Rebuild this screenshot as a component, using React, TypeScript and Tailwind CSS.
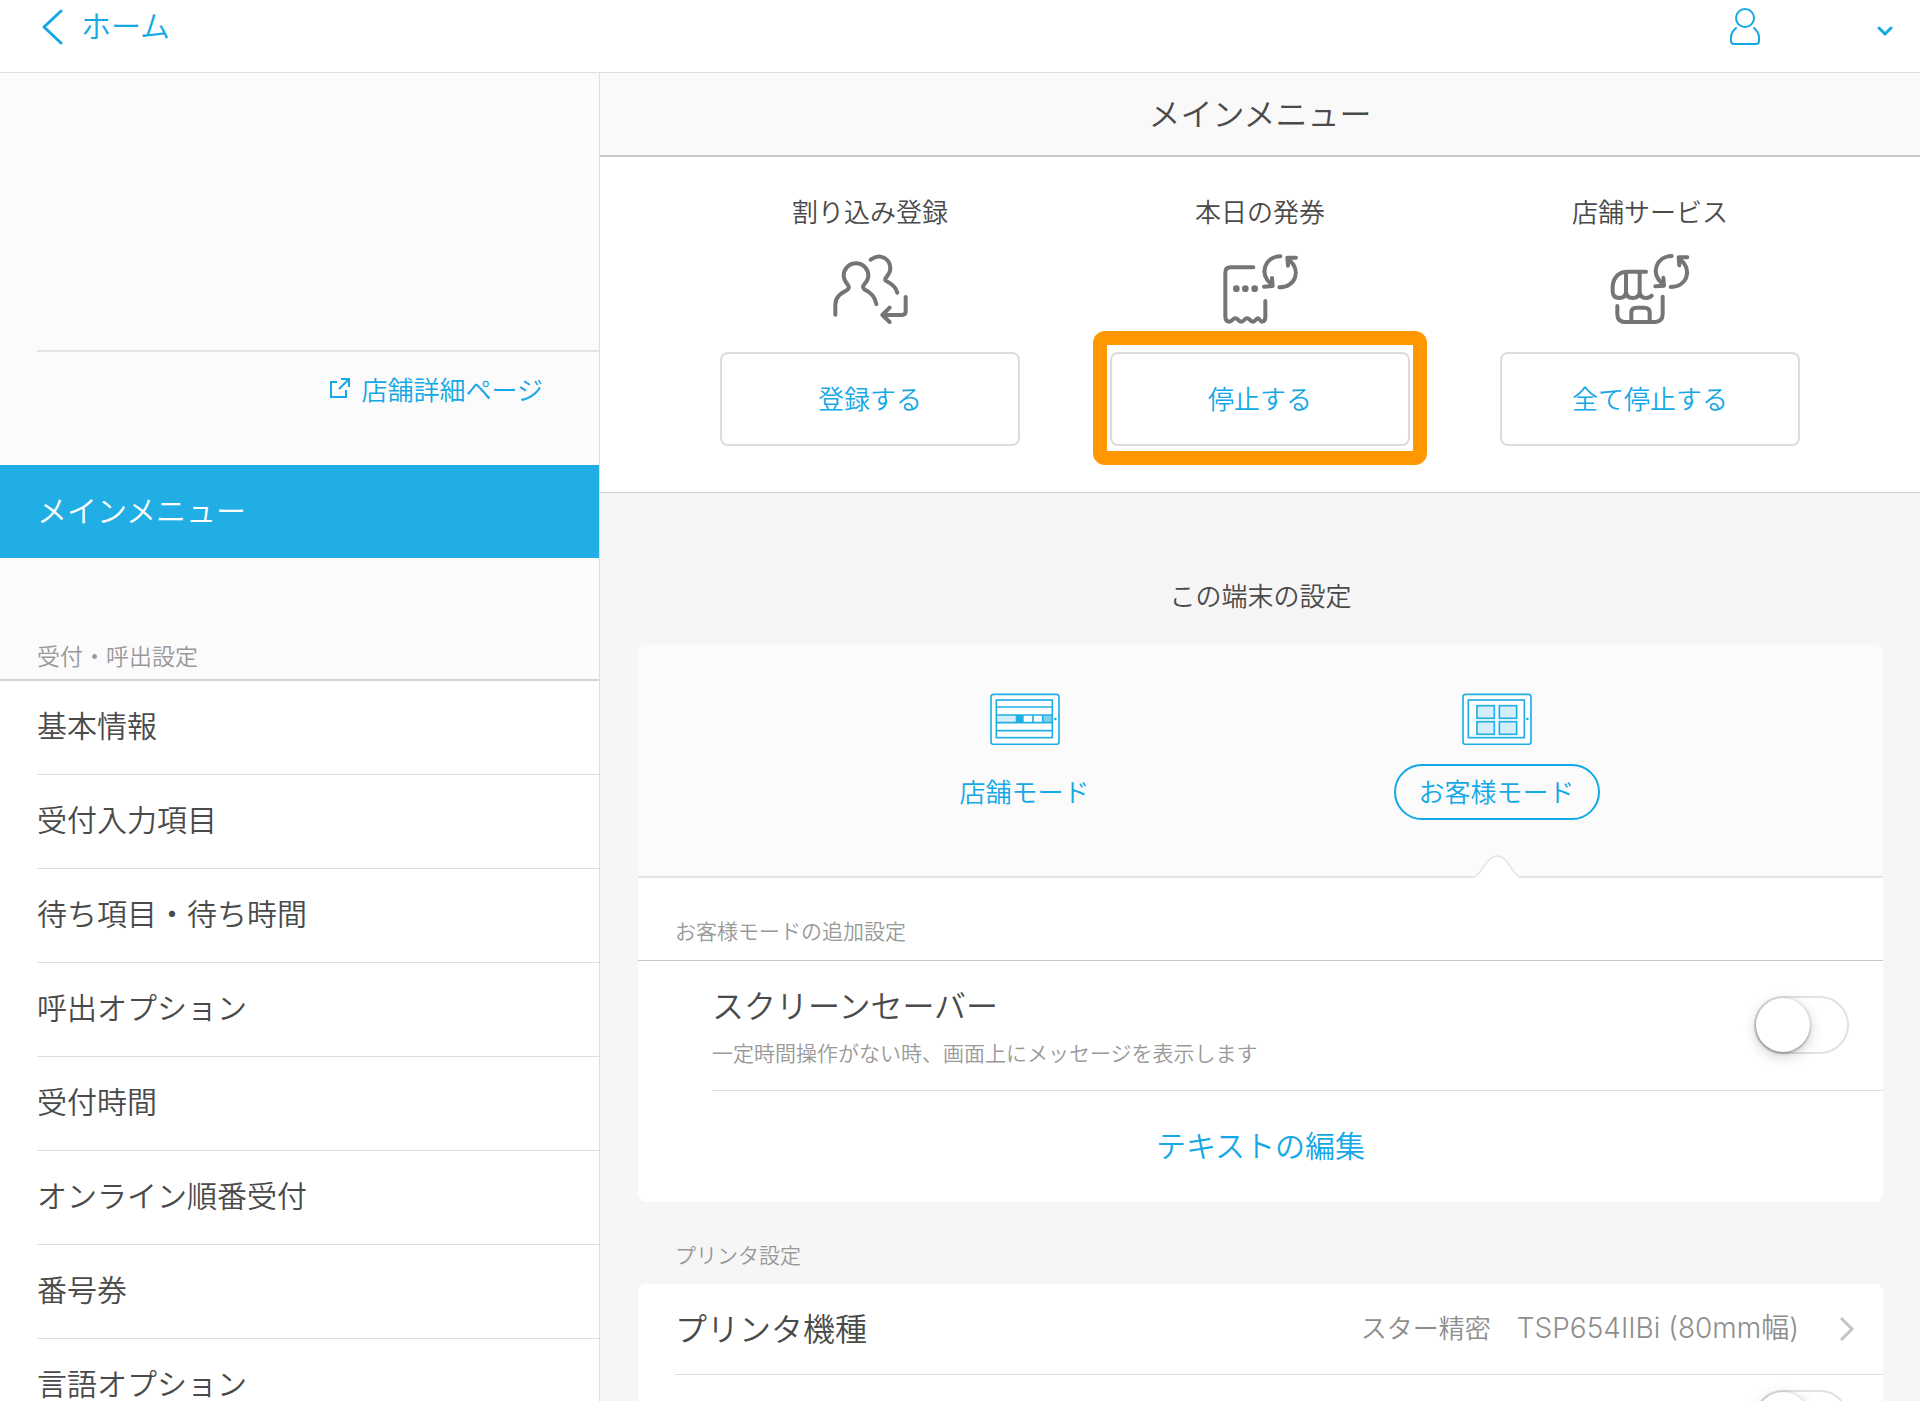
import { ReactNode } from "react";

const menuItems = [
  "基本情報",
  "受付入力項目",
  "待ち項目・待ち時間",
  "呼出オプション",
  "受付時間",
  "オンライン順番受付",
  "番号券",
  "言語オプション",
];

function SyncArrows() {
  return (
    <>
      <path d="M211 34C166 35 145 84 184 118" />
      <path d="M162 125L188 123L186 99" />
      <path d="M208 127C256 127 276 76 236 44" />
      <path d="M258 38L232 38L234 62" />
    </>
  );
}

function ActionIcon({ children }: { children: ReactNode }) {
  return (
    <svg
      className="h-[90px] w-[100px]"
      viewBox="0 0 300 270"
      fill="none"
      stroke="#757575"
      strokeWidth="12"
      strokeLinecap="round"
      strokeLinejoin="round"
      aria-hidden="true"
    >
      {children}
    </svg>
  );
}

function PeopleIcon() {
  return (
    <ActionIcon>
      <path d="M46 209V178C47 155 62 146 80 136Q90 130 84 120C75 108 71 104 71 92A37 37 0 0 1 145 92C145 104 140 110 132 119Q126 128 134 134C150 141 164 152 169 177" />
      <path d="M152 44C180 22 211 42 211 70C211 85 203 92 197 99Q193 105 200 109C218 118 228 128 232 143" />
      <path d="M257 156V199Q257 210 246 210H187M209 188L187 210L209 231" />
    </ActionIcon>
  );
}

function TicketIcon() {
  return (
    <ActionIcon>
      <path d="M130 67H62Q46 67 46 83V216Q47 230 58 230C67 230 68 220 76 220S86 230 94 230S103 220 111 220S121 230 129 230S138 220 144 220S149 230 156 230Q166 229 166 216V168" />
      <g fill="#757575" stroke="none">
        <circle cx="79" cy="131" r="10" />
        <circle cx="106" cy="131" r="10" />
        <circle cx="134" cy="131" r="10" />
      </g>
      <SyncArrows />
    </ActionIcon>
  );
}

function StoreIcon() {
  return (
    <ActionIcon>
      <path d="M138 80H82C54 80 38 102 38 128V139Q39 159 58 159Q77 159 78 140V82M78 140Q79 159 98 159Q118 159 119 140V82M119 140Q120 159 138 159Q149 159 155 152" />
      <path d="M52 183V209Q53 231 75 231H165Q187 230 188 208V155" />
      <path d="M94 230V203Q94 188 109 188H133Q149 188 149 203V230" />
      <g transform="translate(4 -1)">
        <SyncArrows />
      </g>
    </ActionIcon>
  );
}

function TabletIcon({ children }: { children: ReactNode }) {
  return (
    <svg
      className="h-[52px] w-[70px]"
      viewBox="28 26 210 156"
      fill="none"
      stroke="#20aee5"
      strokeWidth="5"
      aria-hidden="true"
    >
      <rect x="31" y="30" width="204" height="150" rx="8" fill="#fff" />
      {children}
      <rect x="47" y="47" width="168" height="113" />
      <circle cx="224" cy="104" r="4" fill="#20aee5" stroke="none" />
    </svg>
  );
}

function StoreModeIcon() {
  return (
    <TabletIcon>
      <g stroke="none">
        <rect x="49" y="92" width="56" height="23" fill="#d4edf8" />
        <rect x="105" y="92" width="24" height="23" fill="#20aee5" />
        <rect x="186" y="92" width="29" height="23" fill="#7dcdef" />
      </g>
      <path d="M47 68H215M47 92H215M47 115H215M47 139H215M157 92V115M186 92V115" />
    </TabletIcon>
  );
}

function CustomerModeIcon() {
  return (
    <TabletIcon>
      <g fill="#d4edf8">
        <rect x="73" y="64" width="52" height="38" />
        <rect x="140" y="64" width="52" height="38" />
        <rect x="73" y="112" width="52" height="38" />
        <rect x="140" y="112" width="52" height="38" />
      </g>
    </TabletIcon>
  );
}

function Action({
  title,
  label,
  icon,
  highlighted = false,
}: {
  title: string;
  label: string;
  icon: ReactNode;
  highlighted?: boolean;
}) {
  return (
    <div className="flex w-[300px] flex-col items-center">
      <h2 className="text-[26px] leading-9">{title}</h2>
      <div className="mt-4">{icon}</div>
      <div className="relative mt-[17px] w-full">
        <button
          type="button"
          className="h-[94px] w-full rounded-lg border-2 border-[#dcdcdc] bg-white pb-1 text-[26px] text-[#14a8e6]"
        >
          {label}
        </button>
        {highlighted && (
          <span className="pointer-events-none absolute -inset-x-[17px] -top-[21px] -bottom-[19px] rounded-xl border-14 border-[#ff9800]" />
        )}
      </div>
    </div>
  );
}

function Toggle({ id, label }: { id: string; label?: string }) {
  return (
    <input
      id={id}
      type="checkbox"
      role="switch"
      aria-label={label}
      className="flex h-[58px] w-[95px] shrink-0 cursor-pointer appearance-none items-center rounded-full border-2 border-[#e2e2e2] bg-white before:h-[54px] before:w-[54px] before:rounded-full before:bg-white before:shadow-[0_4px_14px_rgba(0,0,0,0.2),0_1px_3px_rgba(0,0,0,0.4)] checked:justify-end checked:bg-[#20aee5]"
    />
  );
}

function Sidebar() {
  return (
    <nav className="w-[600px] shrink-0 overflow-y-auto border-r border-[#dedede] bg-[#fbfbfb] [scrollbar-width:none]">
      <div className="ml-[37px] h-[279px] border-b-2 border-[#e4e4e4]" />
      <div className="flex h-[113px] justify-end pt-[18px] pr-14">
        <a href="#store" className="flex h-9 items-center gap-3 text-[26px] text-[#14a8e6]">
          <svg className="h-5 w-5" viewBox="0 0 20 20" fill="none" stroke="currentColor" strokeWidth="2" aria-hidden="true">
            <path d="M7 4H1V19H16V12M11 1H19V9M19 1L9 11" />
          </svg>
          店舗詳細ページ
        </a>
      </div>
      <a href="#main" className="flex h-[93px] items-center bg-[#20aee5] px-[37px] pb-1 text-[30px] text-white">
        メインメニュー
      </a>
      <h2 className="flex h-[123px] items-end border-b-2 border-[#d4d4d4] px-[37px] pb-[6px] text-[23px] leading-9 text-[#999]">
        受付・呼出設定
      </h2>
      <ul className="bg-white pl-[37px]">
        {menuItems.map((item) => (
          <li key={item} className="border-b border-[#dedede]">
            <a href="#menu" className="flex h-[93px] items-center pb-2 text-[30px] leading-none">
              {item}
            </a>
          </li>
        ))}
      </ul>
    </nav>
  );
}

function DeviceSettings() {
  return (
    <section className="mt-[31px] rounded-lg bg-white">
      <div className="relative flex h-[234px] justify-center rounded-t-lg border-b-2 border-[#e4e4e4] bg-[#fbfbfb] pt-[49px] text-[26px] text-[#14a8e6]">
        <div className="flex w-[472px] flex-col items-center gap-[19px]">
          <StoreModeIcon />
          <button type="button" className="h-14 px-6 pb-1">
            店舗モード
          </button>
        </div>
        <div className="relative flex w-[472px] flex-col items-center gap-[19px]">
          <CustomerModeIcon />
          <button type="button" className="h-14 w-[206px] rounded-full border-2 border-[#14a8e6] pb-1">
            お客様モード
          </button>
          <svg className="absolute -bottom-[2px] h-6 w-[46px]" viewBox="0 0 46 24" fill="#fff" aria-hidden="true">
            <path d="M0 24V23C7 22 12 2 23 2S39 22 46 23V24Z" />
            <path d="M0 23C7 22 12 2 23 2S39 22 46 23" fill="none" stroke="#e4e4e4" strokeWidth="1.5" />
          </svg>
        </div>
      </div>
      <h3 className="flex h-[83px] items-end border-b border-[#c8c8c8] px-[37px] pb-3 text-[21px] leading-9 text-[#999]">
        お客様モードの追加設定
      </h3>
      <div className="ml-[74px] flex h-[130px] items-start justify-between border-b border-[#dedede] pt-[19px] pr-[34px]">
        <div>
          <label htmlFor="screensaver" className="block text-[32px] leading-[48px]">
            スクリーンセーバー
          </label>
          <p className="mt-[6px] text-[21px] leading-9 text-[#999]">
            一定時間操作がない時、画面上にメッセージを表示します
          </p>
        </div>
        <div className="pt-4">
          <Toggle id="screensaver" />
        </div>
      </div>
      <button type="button" className="h-[111px] w-full pb-1 text-[30px] text-[#14a8e6]">
        テキストの編集
      </button>
    </section>
  );
}

function PrinterSettings() {
  return (
    <>
      <h3 className="mt-[34px] px-[37px] text-[21px] leading-9 text-[#999]">プリンタ設定</h3>
      <section className="mt-3 rounded-lg bg-white pl-[37px]">
        <a href="#printer" className="flex h-[91px] items-center justify-between border-b border-[#dedede] pr-7">
          <span className="pb-1 text-[32px]">プリンタ機種</span>
          <span className="flex items-center gap-10 text-[26px] text-[#8e8e8e]">
            <span className="pb-0.5">
              {"スター精密　"}
              <span className="font-[Inter,'Noto_Sans_CJK_JP',sans-serif] text-[28px]">TSP654IIBi (80mm幅)</span>
            </span>
            <svg className="h-6 w-4" viewBox="0 0 16 24" fill="none" stroke="#c4c4c4" strokeWidth="3" aria-hidden="true">
              <path d="M2 1L13 12L2 23" />
            </svg>
          </span>
        </a>
        <div className="flex h-[91px] items-start justify-end pt-[15px] pr-[34px]">
          <Toggle id="printer-use" label="プリンタを使用する" />
        </div>
      </section>
    </>
  );
}

export default function App() {
  return (
    <div className="flex h-screen flex-col overflow-hidden bg-white font-['Noto_Sans_CJK_JP',sans-serif] font-[350] text-[#4a4a4a]">
      <header className="flex h-[73px] shrink-0 justify-between border-b border-[#dedede] text-[#14a8e6]">
        <a href="#home" className="flex h-[53px] items-center gap-[18px] pl-[41px] text-[30px]">
          <svg className="h-9 w-[22px]" viewBox="0 0 22 36" fill="none" stroke="currentColor" strokeWidth="3" strokeLinecap="round" strokeLinejoin="round" aria-hidden="true">
            <path d="M20 2L3 18L20 34" />
          </svg>
          <span className="pb-1">ホーム</span>
        </a>
        <button type="button" aria-label="アカウント" className="flex h-[53px] w-[190px] items-center justify-between pr-[27px]">
          <svg className="h-[38px] w-[30px]" viewBox="0 0 30 38" fill="none" stroke="currentColor" strokeWidth="2" strokeLinecap="round">
            <circle cx="15" cy="10" r="9" />
            <path d="M6 20C3 23 1 25 1 30V33Q1 36 4 36H26Q29 36 29 33V30C29 25 27 23 24 20" />
          </svg>
          <svg className="mt-2 h-3 w-4" viewBox="0 0 16 12" fill="none" stroke="currentColor" strokeWidth="3" strokeLinecap="round">
            <path d="M2 3L8 9L14 3" />
          </svg>
        </button>
      </header>
      <div className="flex min-h-0 flex-1">
        <Sidebar />
        <main className="min-w-0 flex-1 overflow-y-auto bg-[#f6f6f6] [scrollbar-width:none]">
          <h1 className="flex h-[84px] items-center justify-center border-b-2 border-[#c8c8c8] bg-[#f9f9f9] pb-1 text-[32px]">
            メインメニュー
          </h1>
          <div className="flex h-[336px] justify-center gap-[90px] border-b border-[#d0d0d0] bg-white pt-9">
            <Action title="割り込み登録" label="登録する" icon={<PeopleIcon />} />
            <Action title="本日の発券" label="停止する" icon={<TicketIcon />} highlighted />
            <Action title="店舗サービス" label="全て停止する" icon={<StoreIcon />} />
          </div>
          <div className="pt-[84px] pr-[37px] pl-[38px]">
            <h2 className="text-center text-[26px] leading-9">この端末の設定</h2>
            <DeviceSettings />
            <PrinterSettings />
          </div>
        </main>
      </div>
    </div>
  );
}
